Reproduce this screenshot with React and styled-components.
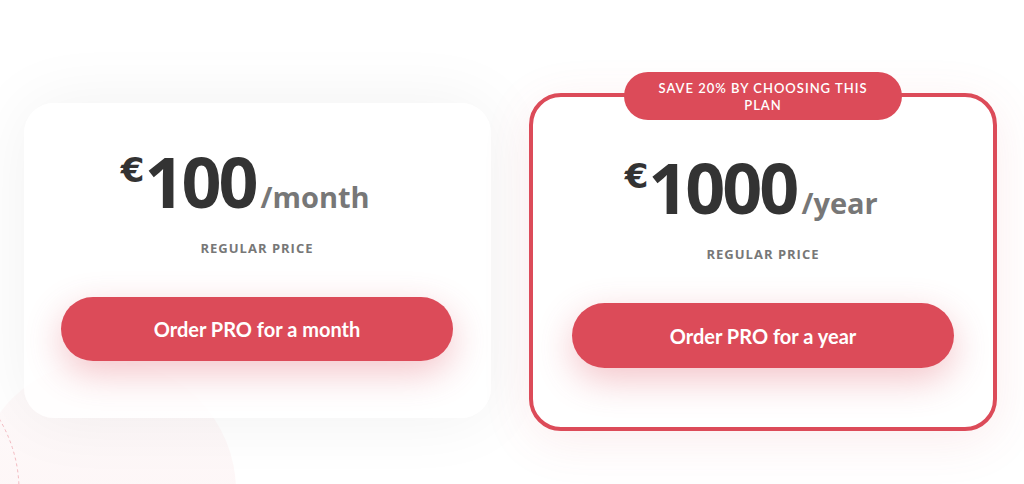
import styled, { createGlobalStyle } from "styled-components";

const GlobalStyle = createGlobalStyle`
  body {
    margin: 0;
    background: #ffffff;
    font-family: "Open Sans", "Liberation Sans", sans-serif;
  }
`;

const Page = styled.div`
  position: relative;
  width: 1024px;
  height: 484px;
  overflow: hidden;
  background: #fff;
`;

const Decor = styled.svg`
  position: absolute;
  left: 0;
  top: 340px;
`;

const Row = styled.div`
  position: relative;
  display: flex;
  align-items: flex-start;
  gap: 38px;
  padding: 93px 0 0 24px;
`;

const Card = styled.div`
  position: relative;
  box-sizing: border-box;
  width: ${(p) => p.width}px;
  margin-top: ${(p) => (p.featured ? 0 : 10)}px;
  display: flex;
  flex-direction: column;
  align-items: center;
  padding: ${(p) => p.pad};
  border-radius: ${(p) => (p.featured ? 32 : 30)}px;
  background: ${(p) => (p.featured ? "#fff" : "rgba(255,255,255,0.72)")};
  border: ${(p) => (p.featured ? "4px solid #dc4b59" : "none")};
  box-shadow: ${(p) =>
    p.featured
      ? "0 10px 50px rgba(220, 75, 89, 0.1)"
      : "0 0 70px rgba(0, 0, 0, 0.06)"};
`;

const Badge = styled.div`
  position: absolute;
  top: -25px;
  left: 50%;
  transform: translateX(-50%);
  box-sizing: border-box;
  width: 278px;
  height: 48px;
  padding: 8px 28px;
  border-radius: 24px;
  background: #dc4b59;
  color: #fff;
  font-family: Lato, "Open Sans", sans-serif;
  font-weight: 600;
  font-size: 13px;
  line-height: 17px;
  letter-spacing: 1px;
  text-align: center;
  text-transform: uppercase;
`;

const Price = styled.div`
  height: 70px;
  font-size: 70px;
  line-height: 70px;
  color: #333;
  white-space: nowrap;
`;

const Amount = styled.span`
  position: relative;
  display: inline-block;
  font-weight: 700;
  letter-spacing: -3px;
`;

/* superscript euro sign hangs left of the number, outside the centred block */
const Currency = styled.span`
  position: absolute;
  right: 100%;
  top: 7px;
  font-family: "DejaVu Sans", "Open Sans", sans-serif;
  font-weight: 700;
  font-size: 34px;
  line-height: 1;
  letter-spacing: 0;
`;

const Period = styled.span`
  font-weight: 700;
  font-size: 29px;
  line-height: 1;
  color: #777;
  margin-left: 5px;
`;

const Label = styled.div`
  margin-top: 24px;
  font-weight: 700;
  font-size: 13px;
  line-height: 16px;
  letter-spacing: 1px;
  color: #777;
  text-transform: uppercase;
`;

const OrderButton = styled.button`
  box-sizing: border-box;
  width: 100%;
  height: ${(p) => p.h}px;
  margin-top: 41px;
  border: none;
  border-radius: 33px;
  background: #dc4b59;
  color: #fff;
  font-family: Lato, "Open Sans", sans-serif;
  font-weight: 700;
  font-size: 20px;
  box-shadow: 0 12px 36px rgba(220, 75, 89, 0.32);
  cursor: pointer;
`;

const plans = [
  {
    width: 467,
    pad: "43px 38px 57px 37px",
    amount: "100",
    period: "/month",
    cta: "Order PRO for a month",
    h: 64,
  },
  {
    width: 468,
    pad: "55px 39px 59px 39px",
    amount: "1000",
    period: "/year",
    cta: "Order PRO for a year",
    h: 65,
    featured: true,
    badge: "Save 20% by choosing this plan",
  },
];

export default function App() {
  return (
    <Page>
      <GlobalStyle />
      <Decor width="240" height="144" viewBox="0 0 240 144">
        <defs>
          <linearGradient id="blob" x1="0" y1="0" x2="0" y2="1">
            <stop offset="0" stopColor="#dc4b59" stopOpacity="0.025" />
            <stop offset="1" stopColor="#dc4b59" stopOpacity="0.07" />
          </linearGradient>
        </defs>
        <circle cx="105" cy="151" r="131" fill="url(#blob)" />
        <circle
          cx="-119"
          cy="150"
          r="138"
          fill="none"
          stroke="#f3b9c0"
          strokeWidth="1"
          strokeDasharray="3 3"
        />
      </Decor>
      <Row>
        {plans.map((p) => (
          <Card key={p.amount} width={p.width} pad={p.pad} featured={p.featured}>
            {p.badge && <Badge>{p.badge}</Badge>}
            <Price>
              <Amount>
                <Currency>€</Currency>
                {p.amount}
              </Amount>
              <Period>{p.period}</Period>
            </Price>
            <Label>Regular price</Label>
            <OrderButton h={p.h}>{p.cta}</OrderButton>
          </Card>
        ))}
      </Row>
    </Page>
  );
}
